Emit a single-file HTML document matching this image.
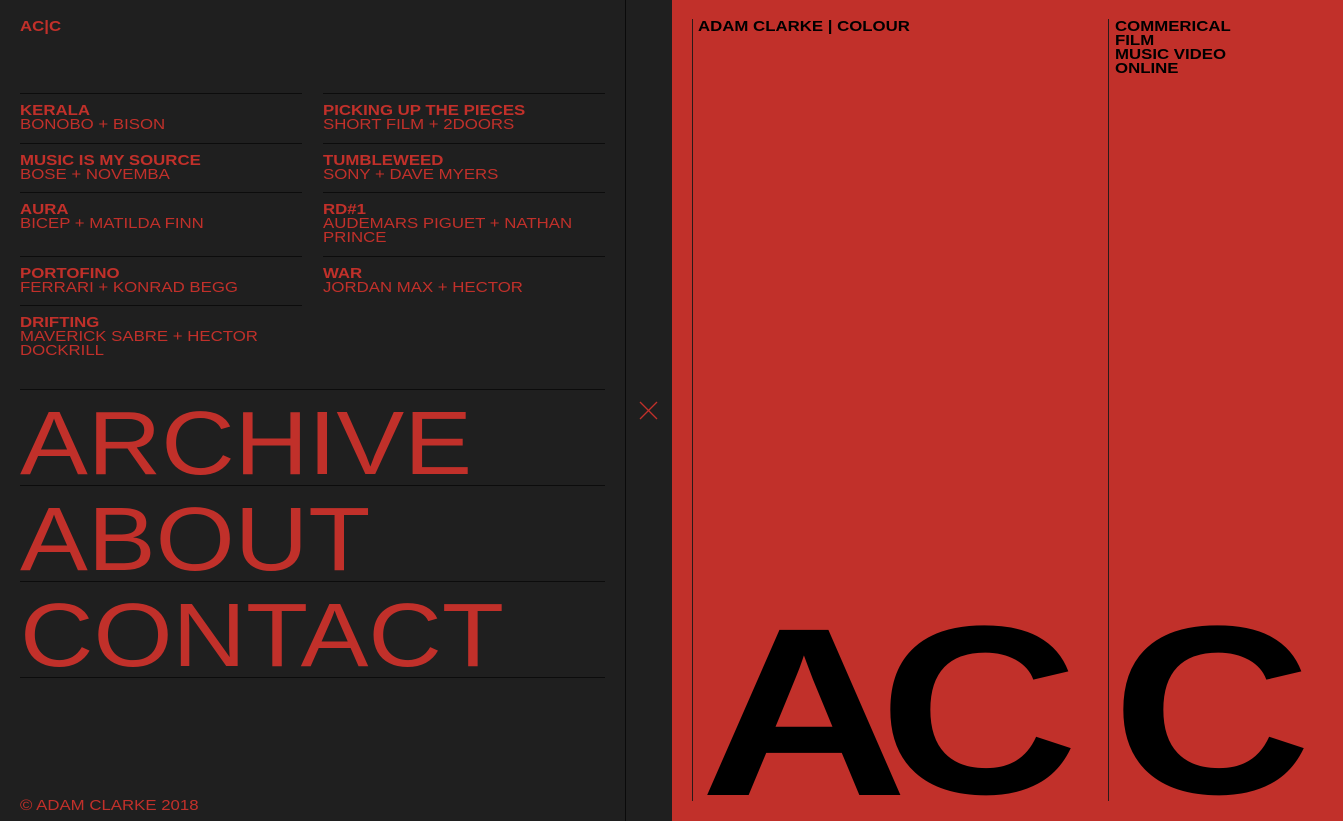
<!DOCTYPE html>
<html style="overflow:hidden;height:821px"><head><meta charset="utf-8"><style>
*{margin:0;padding:0;box-sizing:border-box}
html,body{overflow:hidden}
body{width:1343px;height:821px;overflow:hidden;background:#1f1f1f;font-family:"Liberation Sans",sans-serif;position:relative;color:#c1302a}
.abs{position:absolute}
.s{display:inline-block;transform:scaleX(1.12);transform-origin:left;white-space:nowrap}
.hl{position:absolute;height:1px;background:#0c0c0c}
.it{position:absolute;font-size:15px;line-height:14px;width:290px}
.it b{display:block}
.big{position:absolute;left:20px;font-size:90px;line-height:90px;transform:scaleX(1.13);transform-origin:left;white-space:nowrap}
.red{position:absolute;left:672px;top:0;width:671px;height:821px;background:#c1302a}
.vl{position:absolute;width:1px;background:#2a1a18}
.L{position:absolute;font-weight:bold;font-size:240px;line-height:200px;height:200px;color:#000;transform-origin:left;top:612px}
</style></head><body>
<div class="abs" style="left:20px;top:19px;font-size:15px;font-weight:bold;line-height:16px"><span class="s">AC|C</span></div>

<div class="hl" style="left:20px;top:93px;width:282px"></div>
<div class="hl" style="left:20px;top:143px;width:282px"></div>
<div class="hl" style="left:20px;top:192px;width:282px"></div>
<div class="hl" style="left:20px;top:256px;width:282px"></div>
<div class="hl" style="left:20px;top:305px;width:282px"></div>
<div class="hl" style="left:323px;top:93px;width:282px"></div>
<div class="hl" style="left:323px;top:143px;width:282px"></div>
<div class="hl" style="left:323px;top:192px;width:282px"></div>
<div class="hl" style="left:323px;top:256px;width:282px"></div>

<div class="it" style="left:20px;top:104px"><b><span class="s">KERALA</span></b><span class="s">BONOBO + BISON</span></div>
<div class="it" style="left:20px;top:154px"><b><span class="s">MUSIC IS MY SOURCE</span></b><span class="s">BOSE + NOVEMBA</span></div>
<div class="it" style="left:20px;top:203px"><b><span class="s">AURA</span></b><span class="s">BICEP + MATILDA FINN</span></div>
<div class="it" style="left:20px;top:267px"><b><span class="s">PORTOFINO</span></b><span class="s">FERRARI + KONRAD BEGG</span></div>
<div class="it" style="left:20px;top:316px"><b><span class="s">DRIFTING</span></b><span class="s">MAVERICK SABRE + HECTOR<br>DOCKRILL</span></div>
<div class="it" style="left:323px;top:104px"><b><span class="s">PICKING UP THE PIECES</span></b><span class="s">SHORT FILM + 2DOORS</span></div>
<div class="it" style="left:323px;top:154px"><b><span class="s">TUMBLEWEED</span></b><span class="s">SONY + DAVE MYERS</span></div>
<div class="it" style="left:323px;top:203px"><b><span class="s">RD#1</span></b><span class="s">AUDEMARS PIGUET + NATHAN<br>PRINCE</span></div>
<div class="it" style="left:323px;top:267px"><b><span class="s">WAR</span></b><span class="s">JORDAN MAX + HECTOR</span></div>

<div class="hl" style="left:20px;top:389px;width:585px"></div>
<div class="hl" style="left:20px;top:485px;width:585px"></div>
<div class="hl" style="left:20px;top:581px;width:585px"></div>
<div class="hl" style="left:20px;top:677px;width:585px"></div>
<div class="big" style="top:399px">ARCHIVE</div>
<div class="big" style="top:495px">ABOUT</div>
<div class="big" style="top:591px">CONTACT</div>

<div class="abs" style="left:20px;top:798px;font-size:15px;line-height:16px"><span class="s">© ADAM CLARKE 2018</span></div>

<div class="vl" style="left:625px;top:0;height:821px;background:#0a0a0a"></div>
<svg class="abs" style="left:639px;top:401px" width="19" height="19" viewBox="0 0 19 19"><path d="M1 1L18 18M18 1L1 18" stroke="#c1302a" stroke-width="1.3"/></svg>

<div class="red"></div>
<div class="vl" style="left:692px;top:19px;height:782px"></div>
<div class="vl" style="left:1108px;top:19px;height:782px"></div>
<div class="abs" style="left:698px;top:19px;font-size:15px;font-weight:bold;line-height:16px;color:#000"><span class="s">ADAM CLARKE | COLOUR</span></div>
<div class="abs" style="left:1115px;top:20px;font-size:15px;font-weight:bold;line-height:14px;color:#000"><span class="s">COMMERICAL<br>FILM<br>MUSIC VIDEO<br>ONLINE</span></div>

<div class="L" style="left:700px;top:612px;transform:scaleX(1.2)">A</div>
<div class="L" style="left:879px;top:610px;transform:scaleX(1.15)">C</div>
<div class="L" style="left:1112px;top:610px;transform:scaleX(1.15)">C</div>
</body></html>
